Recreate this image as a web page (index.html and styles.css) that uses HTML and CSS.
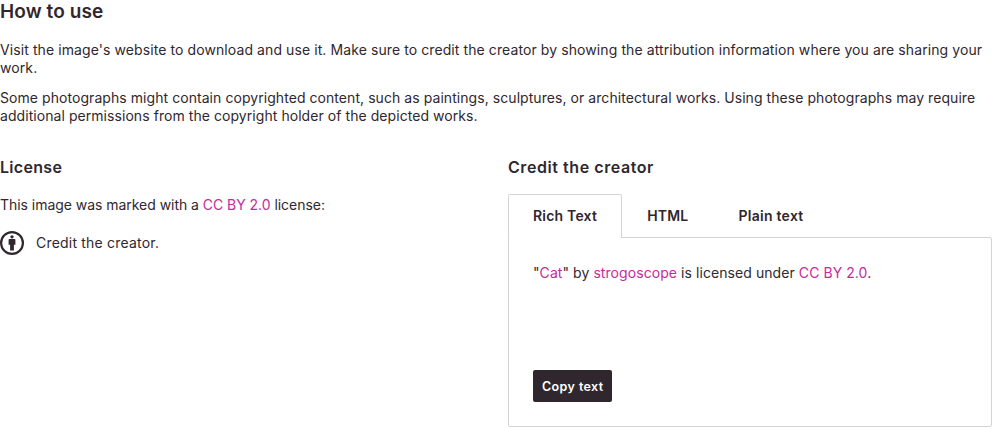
FILE: index.html
```html
<!DOCTYPE html>
<html lang="en">
<head>
<meta charset="utf-8">
<title>How to use</title>
<link rel="stylesheet" href="styles.css">
</head>
<body>
<section class="reuse">
  <h2>How to use</h2>
  <p class="intro">Visit the image's website to download and use it. Make sure to credit the creator by showing the attribution information where you are sharing your work.</p>
  <p class="notice">Some photographs might contain copyrighted content, such as paintings, sculptures, or architectural works. Using these photographs may require additional permissions from the copyright holder of the depicted works.</p>
  <div class="columns">
    <section class="license">
      <h3>License</h3>
      <p>This image was marked with a <a href="#">CC BY 2.0</a> license:</p>
      <div class="element">
        <svg class="icon" viewBox="0 0 24 24" aria-hidden="true">
          <circle cx="12" cy="12" r="10.9" fill="none" stroke="currentColor" stroke-width="2.2"/>
          <circle cx="12" cy="5.8" r="1.65"/>
          <path d="M9.300 8h5.400c.4 0 .7.3.7.7v5h-1.500v5.900h-3.800v-5.900H8.600v-5c0-.4.3-.7.7-.7z"/>
        </svg>
        <span>Credit the creator.</span>
      </div>
    </section>
    <section class="credit">
      <h3>Credit the creator</h3>
      <div class="tabs">
        <button class="tab selected">Rich Text</button>
        <button class="tab">HTML</button>
        <button class="tab plain">Plain text</button>
      </div>
      <div class="panel">
        <p>"<a href="#">Cat</a>" by <a href="#">strogoscope</a> is licensed under <a href="#">CC BY 2.0</a>.</p>
        <button class="copy">Copy text</button>
      </div>
    </section>
  </div>
</section>
</body>
</html>
```
FILE: styles.css
```css
* { box-sizing: border-box; }
body {
  margin: 0;
  background: #fff;
  color: #30272e;
  font: 14px/18px Inter, sans-serif;
  overflow: hidden;
}
h2, h3, p { margin: 0; }
button { font-family: inherit; color: inherit; border: 0; }
a { color: #c52b9b; text-decoration: none; }
h2 { font-size: 19px; line-height: 23px; font-weight: 600; letter-spacing: 0.1px; }
h3 { font-size: 16px; line-height: 20px; font-weight: 600; }
.license h3 { letter-spacing: 0.3px; }
.credit h3 { letter-spacing: 0.57px; }
.intro { margin-top: 18px; letter-spacing: 0.09px; }
.notice { margin-top: 12px; letter-spacing: 0.06px; }
.columns {
  display: grid;
  grid-template-columns: 1fr 1fr;
  gap: 24px;
  margin-top: 32px;
}
.license p { margin-top: 19px; letter-spacing: -0.04px; }
.element {
  display: flex;
  align-items: center;
  gap: 12px;
  margin-top: 17px;
  letter-spacing: 0.2px;
}
.icon { width: 24px; height: 24px; fill: currentColor; }
.tabs { display: flex; margin-top: 17px; }
.tab {
  height: 44px;
  padding: 0 24px 2px;
  border: 1px solid transparent;
  border-bottom: 0;
  background: none;
  font-size: 14px;
  line-height: 18px;
  font-weight: 600;
  letter-spacing: 0.2px;
}
.tab.plain { letter-spacing: 0.27px; }
.tab.selected {
  position: relative;
  border-color: #d6d4d5;
  border-radius: 2px 2px 0 0;
  background: #fff;
}
.panel {
  display: flex;
  flex-direction: column;
  align-items: flex-start;
  justify-content: space-between;
  height: 190px;
  margin-top: -1px;
  padding: 26px 24px 24px;
  border: 1px solid #d6d4d5;
  border-radius: 2px;
}
.panel p { letter-spacing: 0.07px; }
.copy {
  width: 79px;
  height: 32px;
  padding: 1px 0 0 9px;
  border-radius: 2px;
  background: #30272e;
  color: #fff;
  font-size: 12.5px;
  font-weight: 600;
  letter-spacing: 0.4px;
  text-align: left;
}
```
